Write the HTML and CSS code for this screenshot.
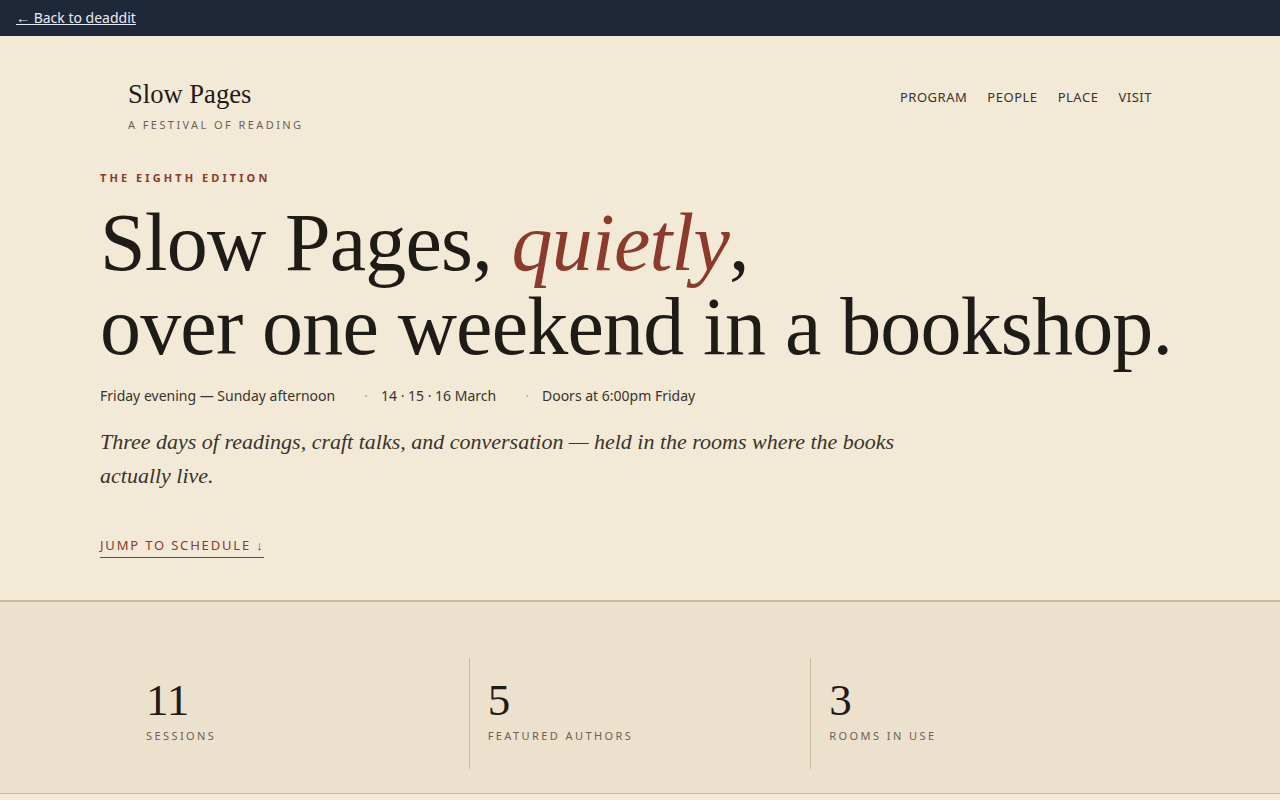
FILE: index.html
```html
<!DOCTYPE html>
<html lang="en">
<head>
<meta charset="utf-8">
<title>Slow Pages</title>
<link rel="stylesheet" href="styles.css">
</head>
<body>
<div class="topbar"><a class="back" href="#">← Back to deaddit</a></div>
<header class="site-header">
  <div class="brand">
    <div class="brand-name">Slow Pages</div>
    <div class="brand-tag">A Festival of Reading</div>
  </div>
  <nav class="nav">
    <a href="#">Program</a>
    <a href="#">People</a>
    <a href="#">Place</a>
    <a href="#">Visit</a>
  </nav>
</header>
<section class="hero">
  <div class="eyebrow">The Eighth Edition</div>
  <h1 class="headline">Slow Pages, <em>quietly</em>,<br>over one weekend in a bookshop.</h1>
  <ul class="meta">
    <li>Friday evening — Sunday afternoon</li>
    <li class="sep">14 · 15 · 16 March</li>
    <li class="sep">Doors at 6:00pm Friday</li>
  </ul>
  <p class="lede">Three days of readings, craft talks, and conversation — held in the rooms where the books actually live.</p>
  <a class="jump" href="#">Jump to schedule ↓</a>
</section>
<section class="stats">
  <div class="stats-inner">
    <div class="stat"><div class="num">11</div><div class="label">Sessions</div></div>
    <div class="stat"><div class="num">5</div><div class="label">Featured authors</div></div>
    <div class="stat"><div class="num">3</div><div class="label">Rooms in use</div></div>
  </div>
</section>
</body>
</html>
```

FILE: styles.css
```css
html, body { margin: 0; padding: 0; }
body {
  background: #f3e9d7;
  color: #1f1b16;
  font-family: "Noto Sans", "Open Sans", sans-serif;
}
.topbar {
  background: #1f2838;
  height: 36px;
  display: flex;
  align-items: center;
  padding-left: 16px;
  padding-bottom: 1px;
  box-sizing: border-box;
}
.back {
  color: #e8ecf2;
  font-size: 14px;
  text-decoration: underline;
}
.site-header {
  display: flex;
  justify-content: space-between;
  align-items: flex-start;
  padding: 43px 128px 0;
}
.brand-name {
  font-family: "Liberation Serif", serif;
  font-size: 26.6px;
  line-height: 30px;
  color: #1f1b16;
}
.brand-tag {
  margin-top: 8px;
  font-size: 11px;
  letter-spacing: 0.22em;
  text-transform: uppercase;
  color: #6b6256;
}
.nav {
  display: flex;
  gap: 20px;
  margin-top: 9px;
}
.nav a {
  font-size: 13px;
  letter-spacing: 0.04em;
  text-transform: uppercase;
  color: #3a332b;
  text-decoration: none;
}
.hero {
  padding: 38px 100px 42px;
}
.eyebrow {
  font-size: 11px;
  font-weight: 700;
  letter-spacing: 0.28em;
  text-transform: uppercase;
  color: #8b3a2b;
}
.headline {
  margin: 16px 0 0;
  font-family: "Liberation Serif", serif;
  font-weight: 400;
  font-size: 82px;
  line-height: 84px;
  color: #1f1b16;
  letter-spacing: -0.01em;
}
.headline em { color: #8b3a2b; }
.meta {
  list-style: none;
  margin: 17px 0 0;
  padding: 0;
  display: flex;
  gap: 29px;
  font-size: 14px;
  color: #3a332b;
}
.meta .sep::before {
  content: "·";
  color: #b8ab95;
  margin-right: 13px;
}
.lede {
  margin: 20px 0 0;
  max-width: 820px;
  font-family: "Liberation Serif", serif;
  font-style: italic;
  font-size: 22px;
  line-height: 34px;
  color: #3a332b;
}
.jump {
  display: inline-block;
  margin-top: 43px;
  font-size: 13px;
  letter-spacing: 0.14em;
  text-transform: uppercase;
  color: #8b3a2b;
  text-decoration: none;
  border-bottom: 1px solid #8b3a2b;
  padding-bottom: 3px;
}
.stats {
  background: #ece1cc;
  border-top: 2px solid #cbbb9c;
  border-bottom: 1px solid #cbbb9c;
  padding: 56px 128px 24px 127px;
}
.stats-inner {
  display: grid;
  grid-template-columns: repeat(3, 1fr);
}
.stat {
  padding: 18px 18px 24px;
  min-height: 69px;
}
.stat:first-child { padding-left: 19px; }
.stat + .stat { border-left: 1px solid #cbbb9c; }
.num {
  font-family: "Liberation Serif", serif;
  font-size: 45px;
  line-height: 48px;
  color: #1f1b16;
}
.label {
  margin-top: 4px;
  font-size: 11px;
  letter-spacing: 0.22em;
  text-transform: uppercase;
  color: #6b6256;
}
```
